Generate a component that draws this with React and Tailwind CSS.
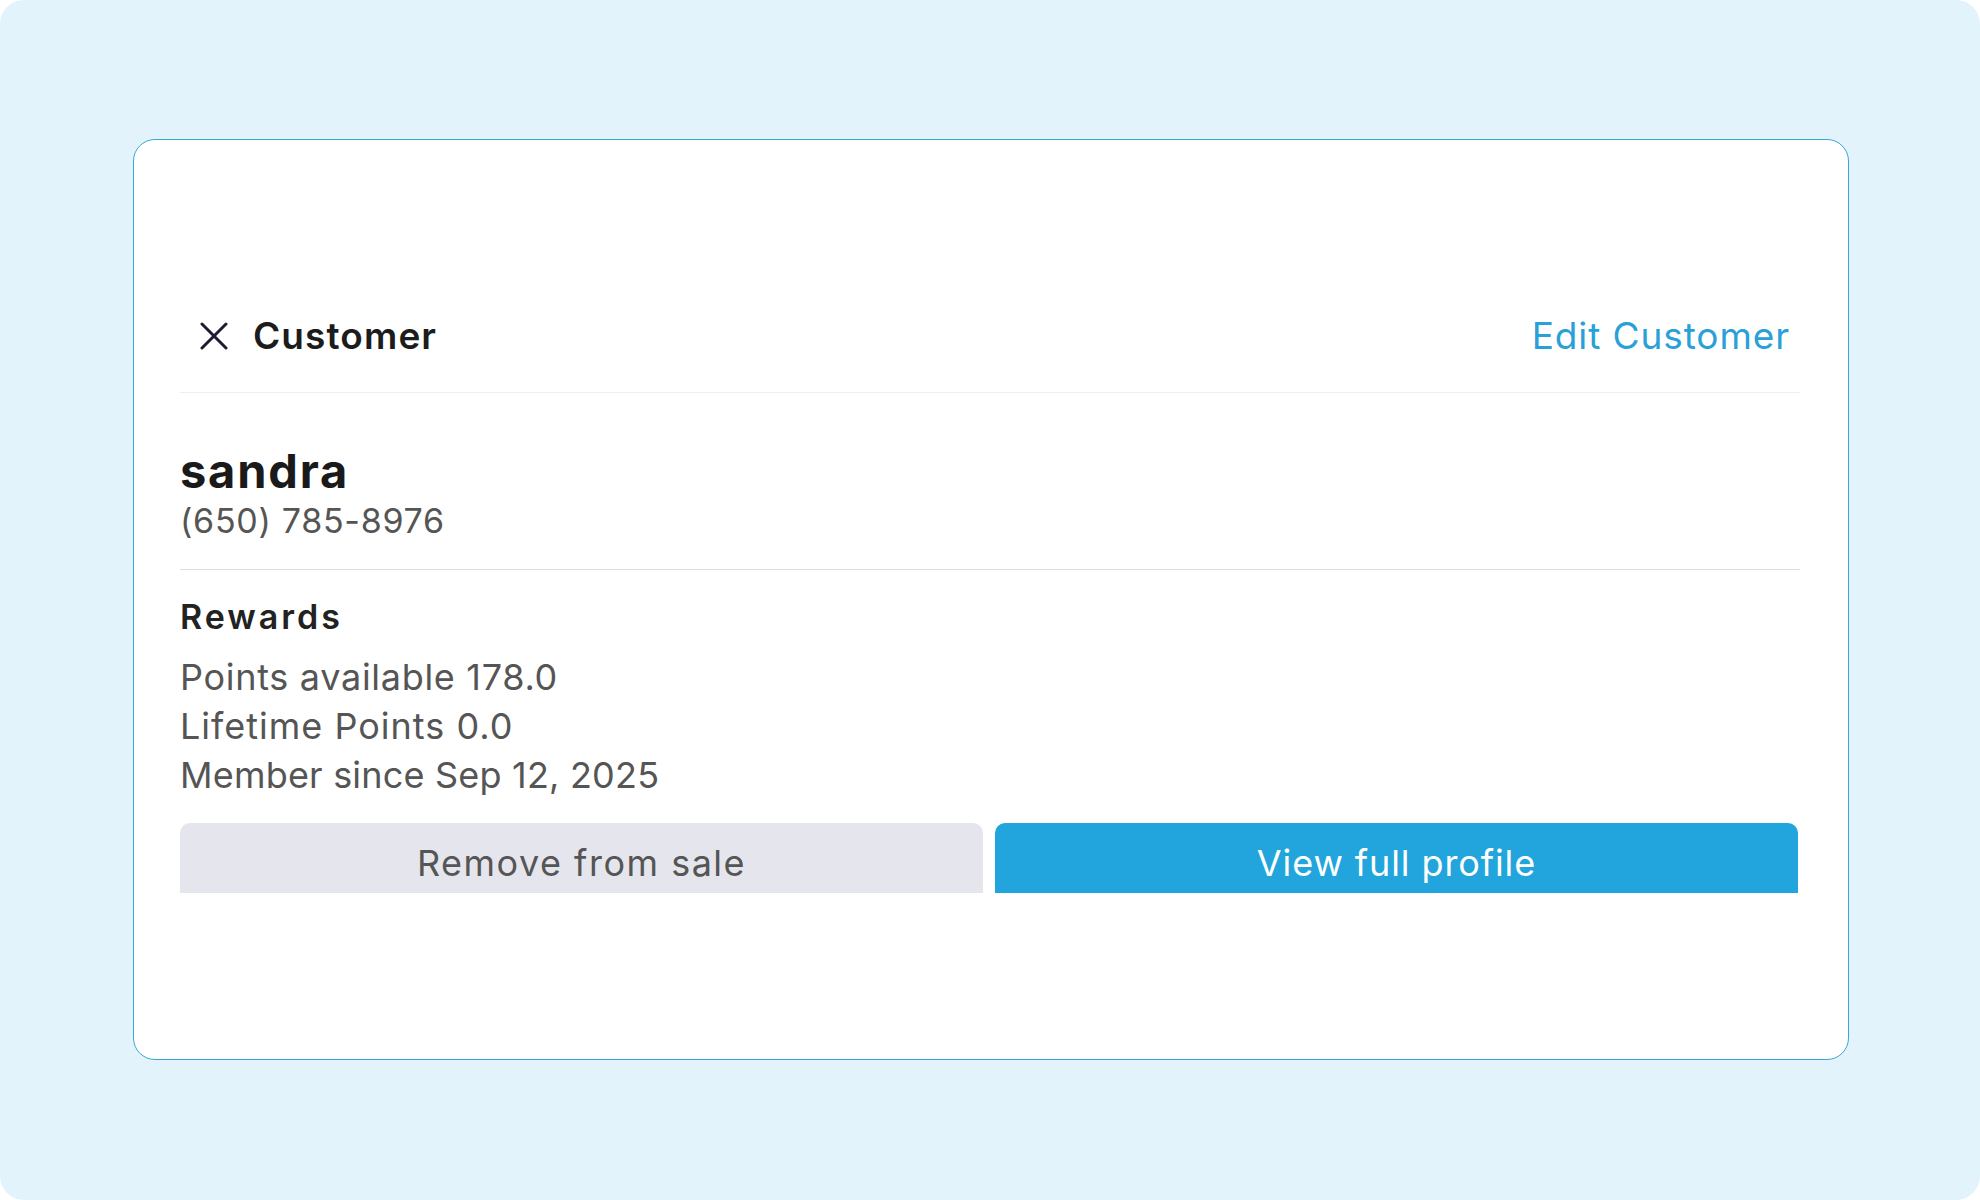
function CloseIcon() {
  return (
    <svg width="28" height="28" viewBox="0 0 28 28" fill="none" className="shrink-0">
      <path d="M2 2 L26 26 M26 2 L2 26" stroke="#1b1b33" strokeWidth="3" strokeLinecap="round" />
    </svg>
  );
}

function App() {
  const rewards = [
    { text: "Points available 178.0", track: "tracking-[0.7px]" },
    { text: "Lifetime Points 0.0", track: "tracking-[1px]" },
    { text: "Member since Sep 12, 2025", track: "tracking-[0.2px]" },
  ];

  return (
    <div className="w-[1980px] h-[1200px] bg-white font-['Inter','Liberation_Sans',sans-serif]">
      <div className="w-full h-full bg-[#e2f3fb] rounded-[24px] pt-[139px] pl-[133px]">
        <div className="w-[1716px] h-[921px] bg-white border border-[#3aa6d4] rounded-[22px] pl-[46px] pr-[48px] pt-[139px]">
          {/* header */}
          <div className="h-[114px] flex items-center justify-between border-b border-[#efefef]">
            <div className="flex items-center pl-[20px] gap-[25px]">
              <CloseIcon />
              <span className="text-[37px] font-semibold text-[#1c1c1c] leading-none tracking-[1.1px]">Customer</span>
            </div>
            <button className="mr-[10px] text-[37px] text-[#2aa0d8] leading-none tracking-[0.9px]">Edit Customer</button>
          </div>

          {/* customer info */}
          <div className="pt-[50px] pb-[25px]">
            <h2 className="text-[47px] leading-[55px] font-bold text-[#1a1a1a] tracking-[1.8px]">sandra</h2>
            <p className="text-[34px] leading-[46px] text-[#555555] tracking-[0.7px]">(650) 785-8976</p>
          </div>

          {/* rewards */}
          <div className="border-t border-[#dcdcdc] pt-[27px]">
            <h3 className="text-[34px] leading-[40px] font-semibold text-[#222222] tracking-[3px]">Rewards</h3>
            <div className="mt-[16px]">
              {rewards.map((line) => (
                <p key={line.text} className={`text-[36px] leading-[49px] text-[#555555] ${line.track}`}>
                  {line.text}
                </p>
              ))}
            </div>
          </div>

          <div className="grid grid-cols-2 gap-[12px] mt-[23px] pr-[2px]">
            <button className="h-[70px] rounded-t-[10px] bg-[#e5e6ed] pt-[9px] text-[36px] text-[#555555] tracking-[1.5px]">
              Remove from sale
            </button>
            <button className="h-[70px] rounded-t-[10px] bg-[#22a5dc] pt-[9px] text-[36px] text-white tracking-[0.9px]">
              View full profile
            </button>
          </div>
        </div>
      </div>
    </div>
  );
}

export default App;
